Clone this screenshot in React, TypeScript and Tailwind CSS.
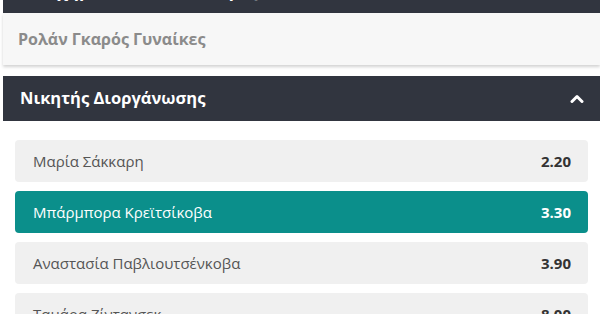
import React from 'react';

const odds = [
    { name: 'Μαρία Σάκκαρη', price: '2.20', active: false },
    { name: 'Μπάρμπορα Κρεϊτσίκοβα', price: '3.30', active: true },
    { name: 'Αναστασία Παβλιουτσένκοβα', price: '3.90', active: false },
    { name: 'Ταμάρα Ζίντανσεκ', price: '8.00', active: false },
];

export default function App() {
    return (
        <div className="w-[600px] h-[314px] overflow-hidden bg-white pl-[3px] font-['Open_Sans',sans-serif]">
            {/* top bar, mostly scrolled out of view */}
            <div className="h-[13px] bg-[#31353f] overflow-hidden">
                <div className="-mt-[21px] pl-[18px] text-[17px] font-bold text-white leading-[24px]">
                    Στοίχημα στο Ρολάν Γκαρός
                </div>
            </div>

            <div className="h-[52px] bg-[#f7f7f7] flex items-center px-[15px] shadow-[0_2px_3px_rgba(0,0,0,0.18)]">
                <span className="text-[16px] font-bold text-[#8b8b8b]">Ρολάν Γκαρός Γυναίκες</span>
            </div>

            <div className="mt-[11px] h-[45px] bg-[#31353f] flex items-center justify-between pl-[17px] pr-[16px]">
                <span className="text-[16.5px] font-bold text-white">Νικητής Διοργάνωσης</span>
                <svg width="14" height="9" viewBox="0 0 14 9" fill="none">
                    <path d="M2 7.5 L7 2.5 L12 7.5" stroke="white" strokeWidth="3" strokeLinecap="round" strokeLinejoin="round" />
                </svg>
            </div>

            <div className="pt-[19px] pl-[12px] pr-[12px] flex flex-col gap-[9px]">
                {odds.map((o) => (
                    <div
                        key={o.name}
                        className={`h-[42px] rounded-[4px] flex items-center justify-between pl-[18px] pr-[17px] text-[15px] ${
                            o.active ? 'bg-[#0b8f8b] text-white' : 'bg-[#f0f0f0] text-[#555]'
                        }`}
                    >
                        <span>{o.name}</span>
                        <span className={`font-bold ${o.active ? 'text-white' : 'text-[#333]'}`}>{o.price}</span>
                    </div>
                ))}
            </div>
        </div>
    );
}
